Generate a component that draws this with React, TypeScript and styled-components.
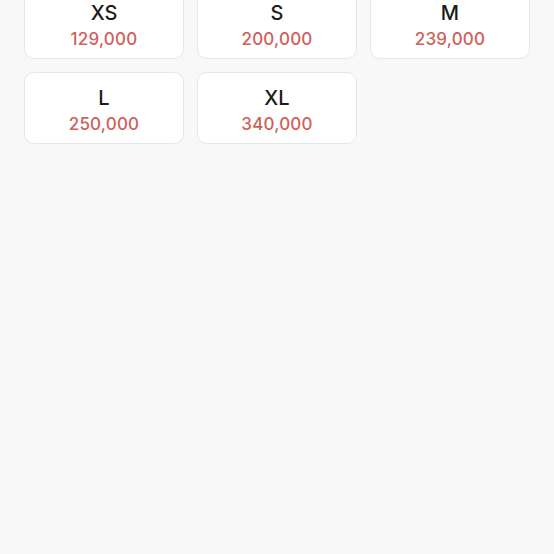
import styled, { createGlobalStyle } from 'styled-components';

const GlobalStyle = createGlobalStyle`
  html, body {
    margin: 0;
    padding: 0;
    background: #f8f8f8;
    font-family: Inter, 'Noto Sans', sans-serif;
  }
`;

const Page = styled.div`
  width: 554px;
  height: 554px;
  overflow: hidden;
  background: #f8f8f8;
  box-sizing: border-box;
  padding: 0 24px;
`;

const SizeGrid = styled.div`
  display: grid;
  grid-template-columns: repeat(3, 1fr);
  gap: 13px;
  margin-top: -13px;
`;

const SizeCard = styled.button`
  display: flex;
  flex-direction: column;
  align-items: center;
  justify-content: center;
  gap: 4px;
  height: 72px;
  padding: 4px 0 0;
  background: #ffffff;
  border: 1px solid #e7e7e7;
  border-radius: 10px;
  box-sizing: border-box;
  font-family: inherit;
  cursor: pointer;
`;

const SizeLabel = styled.span`
  font-size: 20px;
  line-height: 24px;
  font-weight: 500;
  color: #1b1b1b;
`;

const Price = styled.span`
  font-size: 17px;
  line-height: 21px;
  font-weight: 500;
  letter-spacing: 0.2px;
  color: #cf5f5a;
`;

const sizes = [
  { label: 'XS', price: '129,000' },
  { label: 'S', price: '200,000' },
  { label: 'M', price: '239,000' },
  { label: 'L', price: '250,000' },
  { label: 'XL', price: '340,000' },
];

export default function App() {
  return (
    <>
      <GlobalStyle />
      <Page>
        <SizeGrid>
          {sizes.map((s) => (
            <SizeCard key={s.label}>
              <SizeLabel>{s.label}</SizeLabel>
              <Price>{s.price}</Price>
            </SizeCard>
          ))}
        </SizeGrid>
      </Page>
    </>
  );
}
